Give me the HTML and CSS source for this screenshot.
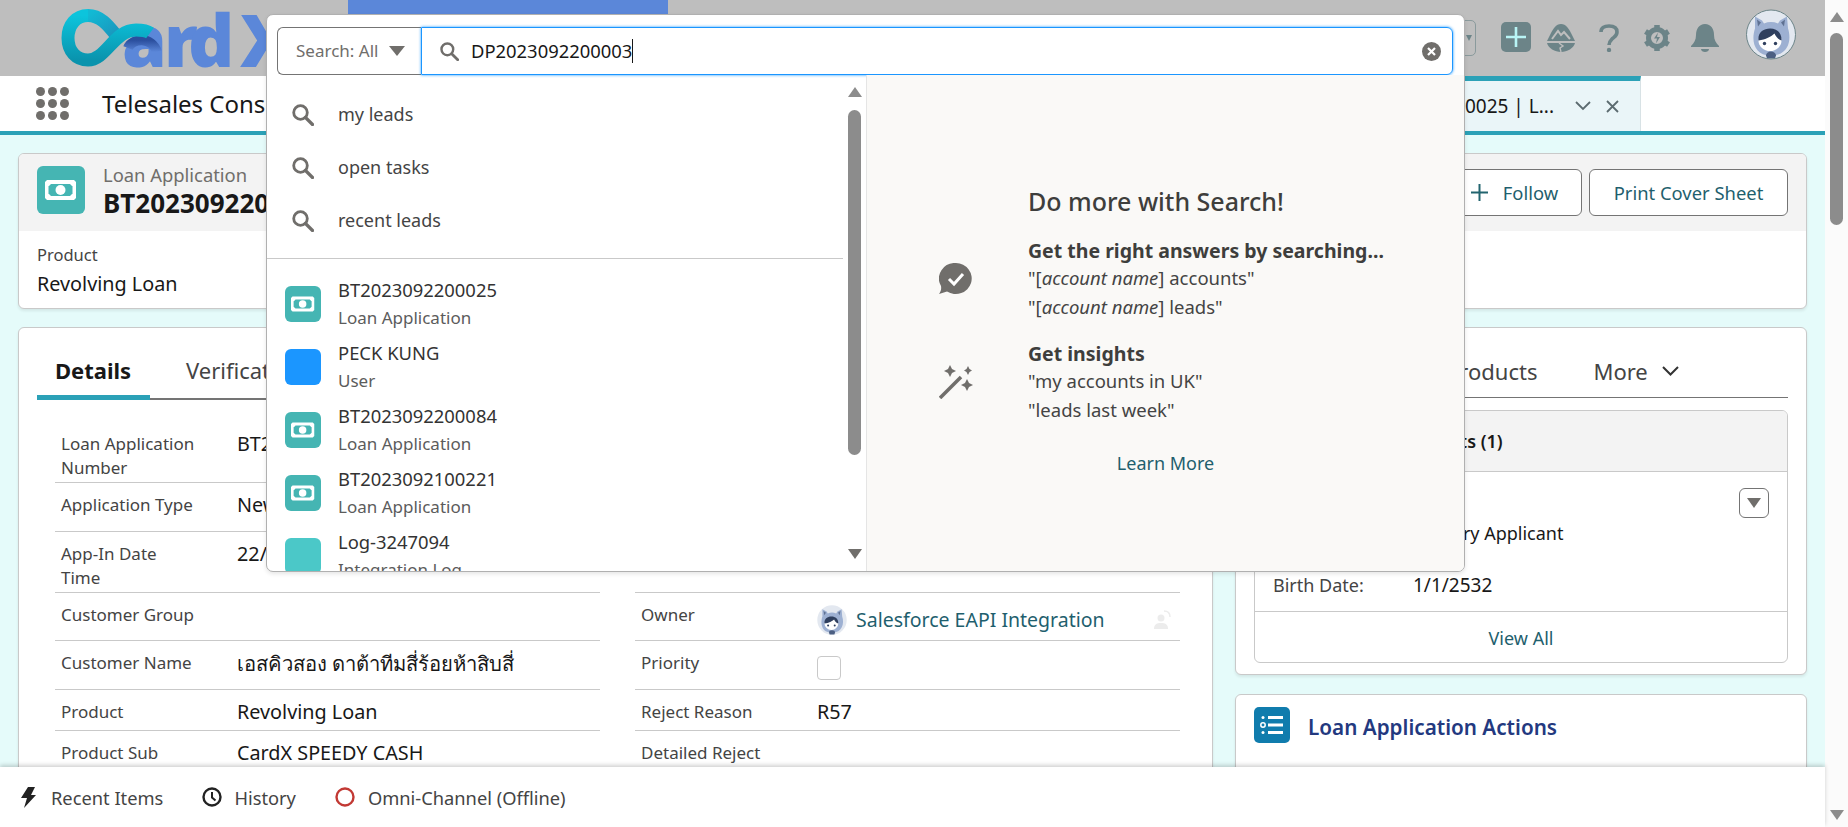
FILE: index.html
```html
<!doctype html>
<html>
<head>
<meta charset="utf-8">
<link rel="stylesheet" href="styles.css">
<title>Telesales Console</title>
</head>
<body>

<svg class="defs" width="0" height="0">
  <symbol id="money" viewBox="0 0 48 48">
    <path d="M10 14h27l2 2v16l-2 2H10l-2-2V16z" fill="#fff"/>
    <path d="M14 18h19l2.500 2.500v7L33 30H14l-2.500-2.500v-7z" fill="#45b5b3"/>
    <circle cx="23.500" cy="24" r="5" fill="#fff"/>
  </symbol>
  <symbol id="find" viewBox="0 0 22 22">
    <circle cx="8.500" cy="8.500" r="6.800" fill="none" stroke="#706e6b" stroke-width="2.800"/>
    <path d="M13.500 13.500L20.500 20.500" stroke="#706e6b" stroke-width="3.200" stroke-linecap="round"/>
  </symbol>
  <symbol id="astro" viewBox="0 0 50 50">
    <circle cx="25" cy="25" r="24.500" fill="#e3e8f0"/>
    <path d="M9 7l7 4 2 3a19 19 0 0 1 14 0l2-3 7-4 1 12c4 12 0 27-17 27S5 31 9 19z" fill="#9db0d2"/>
    <path d="M11 10l4 3-3 4zM39 10l-4 3 3 4z" fill="#5f7192"/>
    <ellipse cx="24" cy="31" rx="11.500" ry="10.500" fill="#fff"/>
    <path d="M12.500 31c-1-8 5-12 11.500-12s12 4 11.500 12c-3-1-6-4-7-7-3 3-9 6-16 7z" fill="#2f3f5e"/>
    <circle cx="18.500" cy="34" r="1.700" fill="#2f3f5e"/>
    <circle cx="29.500" cy="34" r="1.700" fill="#2f3f5e"/>
    <path d="M20 46a5 4 0 0 1 10 0l-1 3h-8z" fill="#4c5f82"/>
  </symbol>
</svg>

<div class="page">
  <header class="topbar">
    <svg class="logo" viewBox="0 0 240 76" width="240" height="76">
      <defs>
        <linearGradient id="ribbon" x1="0" y1="0" x2="0" y2="1">
          <stop offset="0" stop-color="#0cc4dc"/>
          <stop offset="1" stop-color="#0a93ad"/>
        </linearGradient>
        <linearGradient id="ribbon2" x1="0" y1="0" x2="1" y2="1">
          <stop offset="0" stop-color="#12b9d4"/>
          <stop offset="1" stop-color="#1c8fb8"/>
        </linearGradient>
        <linearGradient id="ribbon3" x1="0" y1="0" x2="0" y2="1">
          <stop offset="0" stop-color="#2b4f9e"/>
          <stop offset="1" stop-color="#5b87d9"/>
        </linearGradient>
      </defs>
      <text class="logo-text" x="68 110 134 186" y="67">ardX</text>
      <path d="M74 48C78 38 98 36 103 52" fill="none" stroke="url(#ribbon3)" stroke-width="10"/>
      <path d="M34 15.500C48 15.500 56 28 66 40" fill="none" stroke="url(#ribbon2)" stroke-width="13"/>
      <path d="M34 15.500C22 15.500 14 25 14 38s8 22 20 22C52 60 60 30 82 30c5 0 10 0 14 3" fill="none" stroke="url(#ribbon)" stroke-width="13"/>
    </svg>
    <div class="topbar-right">
      <div class="scope-box"><span class="scope-arrow"></span></div>
      <div class="head-ico head-plus">
        <svg width="30" height="30" viewBox="0 0 30 30"><rect width="30" height="30" rx="5" fill="#6c8488"/><path d="M15 5v20M5 15h20" stroke="#b8f4f5" stroke-width="2.600"/></svg>
      </div>
      <div class="head-ico">
        <svg width="28" height="28" viewBox="0 0 28 28"><path d="M14 0c5 0 8 5 10 9l4 8H0l4-8C6 5 9 0 14 0z" fill="#6c8488"/><path d="M5 15l6-8 3 4 3-3 6 7" fill="none" stroke="#bebebe" stroke-width="2"/><path d="M0 19h28c-1 5-8 9-14 9S1 24 0 19z" fill="#6c8488"/><path d="M12 19l4 3-3 2 1 4" fill="none" stroke="#bebebe" stroke-width="1.400"/></svg>
      </div>
      <div class="head-ico">
        <svg width="20" height="28" viewBox="0 0 20 28"><path d="M2 8c0-4 3-6 8-6s8 2 8 6-3 5-5 7-3 3-3 6" fill="none" stroke="#6c8488" stroke-width="3.600"/><circle cx="10" cy="26" r="2.200" fill="#6c8488"/></svg>
      </div>
      <div class="head-ico">
        <svg width="28" height="28" viewBox="0 0 28 28"><circle cx="14" cy="14" r="8.500" fill="none" stroke="#6c8488" stroke-width="5"/><path d="M14 1v6M14 21v6M2.500 7.500l5 3M20.500 17.500l5 3M25.500 7.500l-5 3M7.500 17.500l-5 3" stroke="#6c8488" stroke-width="5.500"/><path d="M15 8.500l-4 6h3l-1 5 4-6.500h-3z" fill="#6c8488"/></svg>
      </div>
      <div class="head-ico">
        <svg width="28" height="28" viewBox="0 0 28 28"><path d="M14 0c6 0 9 5 9 11 0 5 2 8 5 11v1H0v-1c3-3 5-6 5-11C5 5 8 0 14 0z" fill="#6c8488"/><path d="M10 25h8c0 2-2 3-4 3s-4-1-4-3z" fill="#6c8488"/></svg>
      </div>
      <svg class="head-avatar" width="50" height="51" viewBox="0 0 50 50"><use href="#astro"/><circle cx="25" cy="25" r="24.500" fill="none" stroke="#6c8488"/></svg>
    </div>
  </header>

  <nav class="navbar">
    <div class="waffle">
      <i></i><i></i><i></i><i></i><i></i><i></i><i></i><i></i><i></i>
    </div>
    <div class="app-name">Telesales Console</div>
    <div class="open-tab">
      <span class="open-tab-text">BT2023092200025 | L...</span>
      <svg width="16" height="10" viewBox="0 0 16 10"><path d="M1 1l7 7 7-7" fill="none" stroke="#5c6b70" stroke-width="1.800"/></svg>
      <svg width="13" height="13" viewBox="0 0 13 13"><path d="M1 1l11 11M12 1L1 12" stroke="#5c6b70" stroke-width="1.800"/></svg>
    </div>
  </nav>

  <main class="content">
    <section class="card highlight">
      <div class="highlight-head">
        <div class="obj-icon big"><svg width="48" height="48"><use href="#money"/></svg></div>
        <div class="highlight-title">
          <div class="obj-type">Loan Application</div>
          <div class="obj-name">BT2023092200025</div>
        </div>
        <div class="actions">
          <button class="btn btn-follow">
            <svg width="17" height="17" viewBox="0 0 17 17"><path d="M8.500 0v17M0 8.500h17" stroke="#22646f" stroke-width="2"/></svg>
            Follow
          </button>
          <button class="btn btn-print">Print Cover Sheet</button>
        </div>
      </div>
      <div class="highlight-body">
        <div class="field-name">Product</div>
        <div class="field-value">Revolving Loan</div>
      </div>
    </section>

    <div class="columns">
      <section class="card details">
        <div class="tabs">
          <div class="tab active">Details</div>
          <div class="tab">Verification</div>
        </div>
        <div class="form">
          <div class="row"><div class="lbl">Loan Application Number</div><div class="val">BT2023092200025</div></div>
          <div class="row"></div>
          <div class="row"><div class="lbl">Application Type</div><div class="val">New</div></div>
          <div class="row"></div>
          <div class="row"><div class="lbl">App-In Date Time</div><div class="val">22/9/2566 10:24</div></div>
          <div class="row"></div>
          <div class="row"><div class="lbl">Customer Group</div><div class="val"></div></div>
          <div class="row">
            <div class="lbl">Owner</div>
            <div class="val owner">
              <svg width="30" height="30" viewBox="0 0 50 50"><use href="#astro"/></svg>
              <a class="link">Salesforce EAPI Integration</a>
              <svg class="owner-change" width="18" height="20" viewBox="0 0 18 20"><circle cx="7" cy="8" r="3.500" fill="#ececec"/><path d="M0 19c0-5 3-6 7-6s7 1 7 6z" fill="#ececec"/><path d="M10 1c4 0 6 2 6 6" fill="none" stroke="#ececec" stroke-width="1.500"/></svg>
            </div>
          </div>
          <div class="row"><div class="lbl">Customer Name</div><div class="val val-thai">เอสคิวสอง ดาต้าทีมสี่ร้อยห้าสิบสี่</div></div>
          <div class="row"><div class="lbl">Priority</div><div class="val"><span class="check"></span></div></div>
          <div class="row"><div class="lbl">Product</div><div class="val">Revolving Loan</div></div>
          <div class="row"><div class="lbl">Reject Reason</div><div class="val">R57</div></div>
          <div class="row"><div class="lbl">Product Sub</div><div class="val">CardX SPEEDY CASH</div></div>
          <div class="row"><div class="lbl">Detailed Reject</div><div class="val"></div></div>
        </div>
      </section>

      <div class="side">
        <section class="card related">
          <div class="side-tabs">
            <span class="side-tab">Products</span>
            <span class="side-tab side-more">More
              <svg width="17" height="10" viewBox="0 0 17 10"><path d="M1 1l7.500 7.500L16 1" fill="none" stroke="#333" stroke-width="2"/></svg>
            </span>
          </div>
          <div class="related-list">
            <div class="related-head">Applicants (1)</div>
            <div class="related-body">
              <button class="menu-btn"><span class="tri"></span></button>
              <div class="pair pair-type"><span>Applicant Type:</span><span>Primary Applicant</span></div>
              <div class="pair pair-birth"><span>Birth Date:</span><span>1/1/2532</span></div>
            </div>
            <div class="view-all">View All</div>
          </div>
        </section>
        <section class="card actions-card">
          <div class="actions-icon">
            <svg width="24" height="20" viewBox="0 0 24 20"><circle cx="3" cy="10" r="2.200" fill="none" stroke="#fff" stroke-width="1.500"/><circle cx="3" cy="2.500" r="1.500" fill="#fff"/><circle cx="3" cy="17.500" r="1.500" fill="#fff"/><path d="M8 2.500h15M8 10h15M8 17.500h15" stroke="#fff" stroke-width="3"/></svg>
          </div>
          <div class="actions-title">Loan Application Actions</div>
        </section>
      </div>
    </div>
  </main>

  <footer class="utility">
    <div class="util-item util-recent">
      <svg width="16" height="21" viewBox="0 0 16 21"><path d="M8 0h7l-4 8h5L4 21l3-10H1z" fill="#222"/></svg>
      <span>Recent Items</span>
    </div>
    <div class="util-item">
      <svg width="20" height="20" viewBox="0 0 20 20"><circle cx="10" cy="10" r="8.500" fill="none" stroke="#222" stroke-width="2.400"/><path d="M10 5v5.500l3.500 3" fill="none" stroke="#222" stroke-width="2"/></svg>
      <span>History</span>
    </div>
    <div class="util-item util-omni">
      <svg width="20" height="20" viewBox="0 0 20 20"><circle cx="10" cy="10" r="8.500" fill="none" stroke="#c23934" stroke-width="2.400"/></svg>
      <span>Omni-Channel (Offline)</span>
    </div>
  </footer>

  <div class="search-pop">
    <div class="search-row">
      <div class="scope">Search: All <span class="tri tri-lg"></span></div>
      <div class="search-input">
        <svg width="19" height="19"><use href="#find"/></svg>
        <span class="typed">DP2023092200003</span>
        <svg class="clear" width="19" height="19" viewBox="0 0 19 19"><circle cx="9.500" cy="9.500" r="9.500" fill="#706e6b"/><path d="M6 6l7 7M13 6l-7 7" stroke="#fff" stroke-width="2.200"/></svg>
      </div>
    </div>
    <div class="search-panels">
      <div class="search-left">
        <div class="results">
          <div class="suggest"><svg width="22" height="22"><use href="#find"/></svg><span>my leads</span></div>
          <div class="suggest"><svg width="22" height="22"><use href="#find"/></svg><span>open tasks</span></div>
          <div class="suggest"><svg width="22" height="22"><use href="#find"/></svg><span>recent leads</span></div>
          <hr class="results-line">
          <div class="record">
            <div class="rec-icon"><svg width="36" height="36"><use href="#money"/></svg></div>
            <div><div class="rec-name">BT2023092200025</div><div class="rec-type">Loan Application</div></div>
          </div>
          <div class="record">
            <div class="rec-icon user"></div>
            <div><div class="rec-name">PECK KUNG</div><div class="rec-type">User</div></div>
          </div>
          <div class="record">
            <div class="rec-icon"><svg width="36" height="36"><use href="#money"/></svg></div>
            <div><div class="rec-name">BT2023092200084</div><div class="rec-type">Loan Application</div></div>
          </div>
          <div class="record">
            <div class="rec-icon"><svg width="36" height="36"><use href="#money"/></svg></div>
            <div><div class="rec-name">BT2023092100221</div><div class="rec-type">Loan Application</div></div>
          </div>
          <div class="record">
            <div class="rec-icon log"></div>
            <div><div class="rec-name">Log-3247094</div><div class="rec-type">Integration Log</div></div>
          </div>
        </div>
        <div class="bar bar-pop">
          <span class="tri tri-up"></span>
          <span class="thumb"></span>
          <span class="tri"></span>
        </div>
      </div>
      <div class="search-right">
        <h2 class="more-title">Do more with Search!</h2>
        <div class="tip">
          <svg width="34" height="32" viewBox="0 0 34 32"><path d="M17 0a16 15.500 0 1 1-9 28.500L0 31c2-3 2.500-5 2-8A16 15.500 0 0 1 17 0z" fill="#706e6b"/><path d="M10 16l5 5 9-10" fill="none" stroke="#fff" stroke-width="3"/></svg>
          <div class="tip-text">
            <b>Get the right answers by searching...</b>
            <div>"[<em>account name</em>] accounts"</div>
            <div>"[<em>account name</em>] leads"</div>
          </div>
        </div>
        <div class="tip">
          <svg width="34" height="34" viewBox="0 0 34 34"><path d="M1 33L22 12" stroke="#706e6b" stroke-width="3.500"/><path d="M11 0l2 4 4 2-4 2-2 4-2-4-4-2 4-2zM29 1l1.500 3L33 5.500 30.500 7 29 10l-1.500-3L25 5.500 27.500 4zM28 14l2 4 4 2-4 2-2 4-2-4-4-2 4-2z" fill="#706e6b"/></svg>
          <div class="tip-text">
            <b>Get insights</b>
            <div>"my accounts in UK"</div>
            <div>"leads last week"</div>
          </div>
        </div>
        <div class="learn">Learn More</div>
      </div>
    </div>
  </div>
</div>

<aside class="bar bar-page">
  <span class="tri tri-up"></span>
  <span class="thumb"></span>
  <span class="tri"></span>
</aside>

</body>
</html>
```

FILE: styles.css
```css
* {
    box-sizing: border-box;
}
html, body {
    margin: 0;
    height: 827px;
    overflow: hidden;
}
body {
    display: flex;
    font-family: "Noto Sans", "Open Sans", sans-serif;
    font-size: 17px;
    color: #181818;
    background: #fbfbfb;
}
.defs {
    position: absolute;
}
.page {
    position: relative;
    flex: 1;
    display: flex;
    flex-direction: column;
    min-width: 0;
}

/* top bar, dimmed while search is open */
.topbar {
    height: 76px;
    flex: none;
    display: flex;
    justify-content: space-between;
    background: linear-gradient(#5b87d9, #5b87d9) 348px 0 / 320px 14px no-repeat #bebebe;
    padding-left: 54px;
    padding-right: 29px;
}
.logo-text {
    font-family: "Open Sans", sans-serif;
    font-weight: 800;
    font-size: 72px;
    fill: #5b87d9;
}
.topbar-right {
    display: flex;
    align-items: flex-start;
}
.scope-box {
    width: 60px;
    height: 36px;
    margin-top: 20px;
    margin-right: 19px;
    border: 1px solid #8a9a9c;
    border-radius: 5px;
    display: flex;
    justify-content: flex-end;
    align-items: center;
    padding-right: 3px;
}
.scope-arrow {
    border-left: 3px solid transparent;
    border-right: 3px solid transparent;
    border-top: 6px solid #6c8488;
}
.head-ico {
    width: 48px;
    height: 28px;
    margin-top: 24px;
    display: flex;
    justify-content: center;
}
.head-plus {
    width: 42px;
    height: 30px;
    margin-top: 22px;
}
.head-avatar {
    margin-top: 9px;
    margin-left: 17px;
}

/* app nav */
.navbar {
    height: 59px;
    flex: none;
    display: flex;
    align-items: stretch;
    background: #fff;
    border-bottom: 4px solid #2ba1b7;
}
.waffle {
    display: grid;
    grid-template-columns: repeat(3, 9px);
    grid-auto-rows: 9px;
    gap: 3px;
    align-content: center;
    margin-left: 36px;
}
.waffle i {
    border-radius: 50%;
    background: #706e6b;
}
.app-name {
    margin-left: 33px;
    font-size: 24px;
    line-height: 55px;
    flex: 1;
}
.open-tab {
    width: 300px;
    margin-right: 184px;
    display: flex;
    align-items: center;
    justify-content: flex-end;
    padding-right: 21px;
    gap: 15px;
    background: #eaf5f8;
    border-top: 5px solid #2ba1b7;
    border-right: 1px solid #d8e2e5;
    font-size: 19px;
    white-space: nowrap;
}
.open-tab-text {
    margin-right: 6px;
}

/* record page */
.content {
    flex: 1;
    min-height: 0;
    overflow: hidden;
    background: #e5fbfa;
    padding: 18px 18px 0 18px;
}
.card {
    background: #fff;
    border: 1px solid #c9c9c9;
    border-radius: 6px;
    box-shadow: 0 2px 3px rgba(0, 0, 0, 0.08);
}
.highlight {
    height: 156px;
    overflow: hidden;
}
.highlight-head {
    height: 77px;
    background: #f3f3f3;
    display: flex;
    padding: 12px 18px 0 18px;
}
.obj-icon {
    width: 48px;
    height: 48px;
    border-radius: 6px;
    background: #45b5b3;
}
.highlight-title {
    margin-left: 18px;
    flex: 1;
}
.obj-type {
    font-size: 18.400px;
    line-height: 24px;
    color: #706e6b;
    margin-top: -3px;
}
.obj-name {
    font-size: 26px;
    font-weight: 700;
    line-height: 32px;
}
.actions {
    display: flex;
    gap: 7px;
    padding-top: 3px;
}
.btn {
    height: 47px;
    border: 1px solid #747474;
    border-radius: 6px;
    background: #fff;
    color: #1f5f6e;
    font-family: inherit;
    font-size: 18.400px;
    display: flex;
    align-items: center;
    justify-content: center;
}
.btn-follow {
    width: 135px;
    gap: 15px;
}
.btn-print {
    width: 199px;
}
.highlight-body {
    padding: 11px 18px;
}
.field-name {
    font-size: 16.500px;
    line-height: 26px;
    color: #444;
}
.field-value {
    font-size: 19.800px;
    line-height: 32px;
}
.columns {
    display: flex;
    gap: 22px;
    margin-top: 18px;
}
.details {
    width: 1195px;
    height: 700px;
}
.tabs {
    margin: 0 18px;
    height: 72px;
    display: flex;
    gap: 16px;
    border-bottom: 2px solid #747474;
}
.tab {
    font-size: 22px;
    height: 72px;
    line-height: 84px;
    color: #444;
    padding: 0 20px;
}
.tab.active {
    color: #181818;
    font-weight: 700;
    border-bottom: 5px solid #2ba1b7;
    width: 113px;
    padding: 0 18px;
}
.form {
    margin: 22px 33px 0 18px;
    padding-left: 18px;
    display: grid;
    grid-template-columns: 545px 545px;
    grid-template-rows: 61px 49px 61px 48px 49px 41px 49px;
    column-gap: 35px;
}
.row {
    display: grid;
    grid-template-columns: 176px 1fr;
    align-items: start;
    padding: 10px 6px 0 6px;
    border-bottom: 1px solid #c9c9c9;
    line-height: 24px;
    color: #444;
}
.lbl {
    width: 136px;
}
.val {
    font-size: 19.800px;
    color: #181818;
    white-space: nowrap;
}
.val-thai {
    font-size: 20.200px;
}
.owner {
    display: flex;
    align-items: center;
    gap: 9px;
    height: 30px;
    margin-top: 2px;
    font-size: 19.500px;
}
.link {
    color: #1f5f6e;
}
.owner-change {
    margin-left: auto;
    margin-right: 2px;
}
.check {
    display: block;
    width: 24px;
    height: 24px;
    margin-top: 5px;
    border: 1px solid #c9c9c9;
    border-radius: 4px;
}

/* right column */
.side {
    width: 572px;
    display: flex;
    flex-direction: column;
    gap: 19px;
}
.related {
    height: 348px;
    padding: 0 18px;
}
.side-tabs {
    height: 70px;
    display: flex;
    align-items: center;
    padding-top: 17px;
    padding-left: 192px;
    gap: 56px;
    border-bottom: 1px solid #747474;
    font-size: 22px;
    color: #444;
}
.side-more {
    display: flex;
    align-items: center;
    gap: 14px;
}
.related-list {
    margin-top: 12px;
    height: 253px;
    border: 1px solid #c9c9c9;
    border-radius: 6px;
    overflow: hidden;
}
.related-head {
    height: 61px;
    background: #f3f3f3;
    border-bottom: 1px solid #c9c9c9;
    font-size: 18px;
    font-weight: 600;
    line-height: 60px;
    padding-left: 129px;
}
.related-body {
    position: relative;
    height: 140px;
    border-bottom: 1px solid #c9c9c9;
    padding: 48px 18px 0 18px;
}
.menu-btn {
    position: absolute;
    top: 16px;
    right: 18px;
    width: 30px;
    height: 30px;
    border: 1px solid #747474;
    border-radius: 6px;
    background: #fff;
    display: flex;
    align-items: center;
    justify-content: center;
}
.pair {
    display: grid;
    grid-template-columns: 140px 1fr;
    font-size: 18px;
    line-height: 26px;
}
.pair-birth {
    margin-top: 26px;
    font-size: 19px;
}
.pair span:first-child {
    color: #444;
    font-size: 18px;
}
.view-all {
    text-align: center;
    color: #1f5f6e;
    font-size: 18px;
    line-height: 52px;
}
.actions-card {
    height: 200px;
    padding: 12px 18px;
    display: flex;
    gap: 18px;
}
.actions-icon {
    width: 36px;
    height: 36px;
    border-radius: 5px;
    background: #107cad;
    display: flex;
    align-items: center;
    justify-content: center;
}
.actions-title {
    font-size: 20.700px;
    font-weight: 600;
    line-height: 40px;
    color: #23397f;
}

/* footer */
.utility {
    height: 60px;
    flex: none;
    display: flex;
    align-items: center;
    background: #fff;
    box-shadow: 0 -2px 4px rgba(0, 0, 0, 0.18);
    padding: 0 0 0 20px;
    gap: 39px;
    font-size: 18.300px;
    color: #444;
    position: relative;
}
.util-item {
    display: flex;
    align-items: center;
    gap: 12px;
}
.util-recent {
    gap: 15px;
}
.util-omni {
    gap: 13px;
}

/* scrollbars and small triangles */
.tri {
    display: block;
    width: 0;
    height: 0;
    border-left: 7px solid transparent;
    border-right: 7px solid transparent;
    border-top: 10px solid #706e6b;
}
.tri-up {
    border-top: 0;
    border-bottom: 10px solid #8c8c8c;
}
.tri-lg {
    display: inline-block;
    border-left-width: 8px;
    border-right-width: 8px;
    margin-left: 11px;
}
.bar {
    flex: none;
    width: 23px;
    display: flex;
    flex-direction: column;
    align-items: center;
}
.thumb {
    display: block;
    width: 13px;
    border-radius: 7px;
    background: #8c8c8c;
}
.bar-page {
    padding-top: 12px;
}
.bar-page .thumb {
    height: 192px;
    margin-top: 11px;
    margin-bottom: 585px;
}
.bar-page .tri:last-child {
    border-top-color: #8c8c8c;
}

/* search dropdown */
.search-pop {
    position: absolute;
    left: 266px;
    top: 14px;
    width: 1199px;
    height: 558px;
    background: #fff;
    border: 1px solid #b0b0b0;
    border-radius: 7px;
    box-shadow: 0 2px 4px rgba(0, 0, 0, 0.1);
    display: flex;
    flex-direction: column;
    overflow: hidden;
}
.search-row {
    height: 60px;
    flex: none;
    display: flex;
    padding: 12px 11px 0 10px;
}
.scope {
    width: 144px;
    height: 48px;
    border: 1px solid #747474;
    border-right: 0;
    border-radius: 6px 0 0 6px;
    display: flex;
    align-items: center;
    padding-left: 18px;
    padding-bottom: 1px;
    color: #706e6b;
}
.search-input {
    flex: 1;
    height: 48px;
    border: 1px solid #1b96ff;
    border-radius: 0 6px 6px 0;
    box-shadow: 0 0 3px #1b96ff;
    display: flex;
    align-items: center;
    padding-left: 18px;
    padding-right: 11px;
    gap: 12px;
    font-size: 18.400px;
}
.typed {
    border-right: 1px solid #181818;
    line-height: 24px;
}
.clear {
    margin-left: auto;
}
.search-panels {
    flex: 1;
    min-height: 0;
    display: flex;
}
.search-left {
    width: 600px;
    flex: none;
    display: flex;
    border-right: 1px solid #e5e5e5;
}
.results {
    flex: 1;
    overflow: hidden;
    padding-top: 13px;
}
.suggest {
    height: 53px;
    display: flex;
    align-items: center;
    gap: 24px;
    padding-left: 25px;
    font-size: 18px;
    color: #444;
}
.suggest span {
    margin-top: -2px;
}
.results-line {
    margin: 11px 0 13px;
    border: 0;
    border-top: 1px solid #c9c9c9;
}
.record {
    height: 63px;
    display: flex;
    align-items: center;
    gap: 17px;
    padding-left: 18px;
}
.rec-icon {
    width: 36px;
    height: 36px;
    flex: none;
    border-radius: 6px;
    background: #45b5b3;
}
.rec-icon.user {
    background: #1b96ff;
}
.rec-icon.log {
    background: #4bc8c8;
}
.rec-name {
    font-size: 18.400px;
    line-height: 28px;
    color: #333;
}
.rec-type {
    line-height: 28px;
    color: #5c5c5c;
}
.bar-pop {
    padding-top: 12px;
    padding-bottom: 12px;
}
.bar-pop .thumb {
    height: 345px;
    margin-top: 13px;
    margin-bottom: 94px;
}
.search-right {
    flex: 1;
    background: #faf9f7;
    padding: 111px 0 0 72px;
    color: #444;
    font-size: 18.500px;
}
.more-title {
    margin: 0 0 21px 89px;
    font-size: 25px;
    font-weight: 500;
    line-height: 30px;
    color: #3e3e3c;
}
.tip {
    display: flex;
    align-items: center;
    gap: 55px;
    margin-bottom: 19px;
    line-height: 28.500px;
}
.tip-text b {
    display: block;
    font-size: 19.500px;
    line-height: 27px;
    color: #3e3e3c;
}
.learn {
    margin: 25px 0 0 -72px;
    text-align: center;
    color: #1f5f6e;
    font-size: 18px;
    line-height: 28px;
}
```
